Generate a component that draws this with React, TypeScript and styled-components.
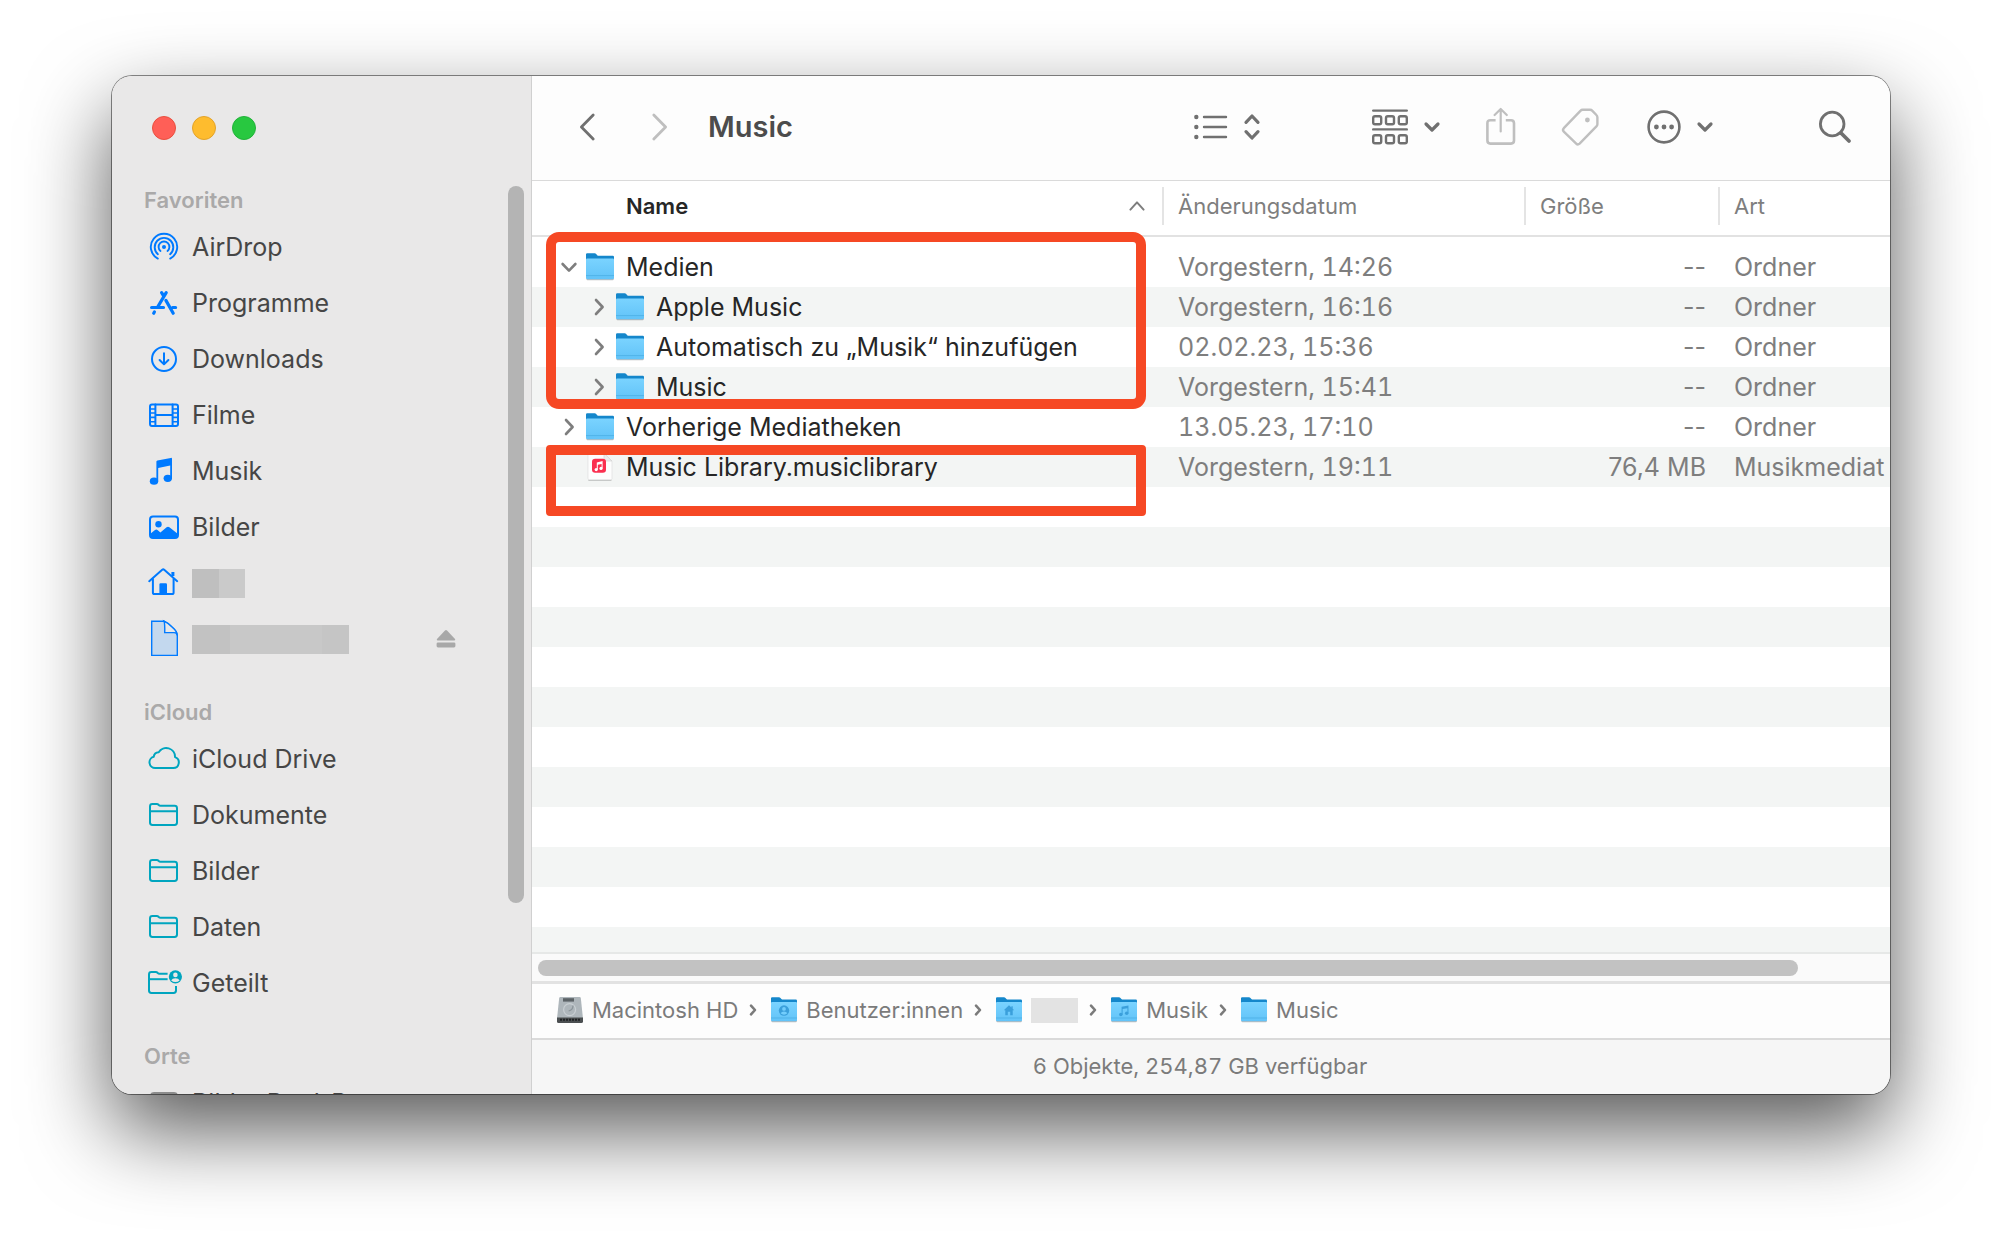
import React from "react";
import styled, { createGlobalStyle } from "styled-components";

const GlobalStyle = createGlobalStyle`
  *, *::before, *::after { box-sizing: border-box; }
  html, body { margin: 0; background: #fff; }
  body { font-family: Inter, "Liberation Sans", sans-serif; color: #262626; }
  button { font: inherit; color: inherit; background: none; border: 0; padding: 0; cursor: default; }
  a { color: inherit; text-decoration: none; }
  svg { display: block; flex: none; overflow: visible; }
`;

/* ---------- layout ---------- */

const Desktop = styled.div`
  height: 100vh;
  padding: 76px 112px 148px;
  display: flex;
  overflow: hidden;
`;

const Window = styled.main`
  flex: 1;
  min-width: 0;
  display: flex;
  overflow: hidden;
  border-radius: 20px;
  background: #fff;
  box-shadow: 0 0 0 1px rgba(0, 0, 0, 0.45), 0 36px 84px rgba(0, 0, 0, 0.66);
`;

const Sidebar = styled.aside`
  flex: none;
  width: 420px;
  display: flex;
  flex-direction: column;
  background: #e9e8e8;
  border-right: 1px solid #d0d0d0;
`;

const TrafficLights = styled.div`
  flex: none;
  height: 105px;
  padding: 0 0 2px 40px;
  display: flex;
  align-items: center;
  gap: 16px;
`;

const Light = styled.button<{ $fill: string; $edge: string }>`
  width: 24px;
  height: 24px;
  border-radius: 50%;
  background: ${(p) => p.$fill};
  border: 1px solid ${(p) => p.$edge};
`;

const SidebarBody = styled.div`
  flex: 1;
  min-height: 0;
  display: flex;
`;

const SidebarList = styled.nav`
  flex: 1;
  min-width: 0;
  overflow: hidden;
  display: flex;
  flex-direction: column;
  gap: 26px;
`;

const ScrollTrack = styled.div`
  flex: none;
  padding: 5px 7px 0 0;
`;

const ScrollThumb = styled.div`
  width: 16px;
  height: 79%;
  border-radius: 8px;
  background: #b4b4b4;
`;

const SectionTitle = styled.h2`
  margin: 0;
  padding-left: 32px;
  font-size: 22px;
  font-weight: 600;
  line-height: 38px;
  color: #aaa9a9;
`;

const Items = styled.ul`
  margin: 0;
  padding: 0;
  list-style: none;
`;

const Item = styled.li`
  height: 56px;
  padding: 0 52px 0 36px;
  display: flex;
  align-items: center;
  justify-content: space-between;
  color: #a8a8a8;
`;

const ItemLink = styled.a<{ $tint: string }>`
  display: flex;
  align-items: center;
  gap: 12px;
  font-size: 25px;
  line-height: 32px;
  white-space: nowrap;
  color: #464646;
  > svg { color: ${(p) => p.$tint}; }
`;

const Redaction = styled.span<{ $w: number; $h: number; $fill: string }>`
  display: block;
  width: ${(p) => p.$w}px;
  height: ${(p) => p.$h}px;
  background: ${(p) => p.$fill};
`;

const Main = styled.section`
  flex: 1;
  min-width: 0;
  display: flex;
  flex-direction: column;
`;

const Toolbar = styled.header`
  flex: none;
  height: 105px;
  padding: 0 39px 2px 47px;
  display: flex;
  align-items: center;
  background: #fdfdfd;
  border-bottom: 1px solid #dadada;
`;

const History = styled.div`
  display: flex;
  gap: 57px;
`;

const FolderTitle = styled.h1`
  margin: 0 0 0 40px;
  font-size: 29px;
  line-height: 36px;
  font-weight: 600;
  color: #4c4c4c;
`;

const Tools = styled.div`
  margin-left: auto;
  display: flex;
  align-items: center;
  gap: 46px;
`;

const ToolButton = styled.button<{ $dim?: boolean; $before?: number; $after?: number }>`
  display: flex;
  align-items: center;
  gap: 16px;
  margin: 0 ${(p) => p.$after ?? 0}px 0 ${(p) => p.$before ?? 0}px;
  color: ${(p) => (p.$dim ? "#bfbfbf" : "#707070")};
`;

const FileList = styled.div`
  position: relative;
  flex: 1;
  min-height: 0;
  overflow: hidden;
  display: flex;
  flex-direction: column;
`;

const Table = styled.table`
  width: 100%;
  table-layout: fixed;
  border-collapse: collapse;
  tbody::before { content: ""; display: block; height: 10px; }
`;

const HeadCell = styled.th`
  height: 55px;
  padding: 0 0 4px;
  border-bottom: 2px solid #e2e2e2;
  text-align: left;
  font-size: 22px;
  font-weight: 400;
  color: #7e7e7e;
`;

const HeadButton = styled.button<{ $sorted?: boolean }>`
  width: 100%;
  height: 38px;
  display: flex;
  align-items: center;
  justify-content: space-between;
  padding: ${(p) => (p.$sorted ? "0 17px 0 94px" : "0 0 0 14px")};
  border-left: ${(p) => (p.$sorted ? "0" : "2px solid #e4e4e4")};
  font-weight: ${(p) => (p.$sorted ? 600 : 400)};
  color: ${(p) => (p.$sorted ? "#262626" : "inherit")};
  > svg { color: #7e7e7e; }
`;

const Row = styled.tr`
  height: 40px;
  &:nth-child(even) { background: #f3f5f4; }
`;

const Cell = styled.td`
  padding: 0 0 0 16px;
  overflow: hidden;
  white-space: nowrap;
  font-size: 25px;
  line-height: 32px;
  color: #7e7e7e;
`;

const NameCell = styled(Cell)`
  padding: 0;
  color: #262626;
`;

const DateCell = styled(Cell)`
  font-variant-numeric: tabular-nums;
`;

const SizeCell = styled(Cell)`
  padding-right: 12px;
  text-align: right;
`;

const NameLine = styled.div<{ $level: number }>`
  display: flex;
  align-items: center;
  padding-left: ${(p) => 28 + p.$level * 30}px;
`;

const Disclosure = styled.button`
  flex: none;
  width: 18px;
  margin-right: 8px;
  display: flex;
  justify-content: center;
  color: #7e7e7e;
`;

const FileName = styled.span`
  margin-left: 12px;
`;

const EmptyRows = styled.div`
  flex: 1;
  background: repeating-linear-gradient(#fff 0 40px, #f3f5f4 40px 80px);
`;

const Mark = styled.div<{ $top: number; $height: number; $radius: number }>`
  position: absolute;
  left: 14px;
  right: 744px;
  top: ${(p) => p.$top}px;
  height: ${(p) => p.$height}px;
  border: 10px solid #f64824;
  border-radius: ${(p) => p.$radius}px;
  pointer-events: none;
`;

const HorizontalTrack = styled.div`
  flex: none;
  height: 32px;
  padding: 6px 92px 6px 6px;
  background: #fafafa;
  border-top: 2px solid #e6e8e7;
  border-bottom: 3px solid #e2e2e2;
`;

const HorizontalThumb = styled.div`
  height: 16px;
  border-radius: 8px;
  background: #c2c2c2;
`;

const PathBar = styled.nav`
  flex: none;
  height: 56px;
  padding: 0 0 2px 25px;
  display: flex;
  align-items: center;
  background: #fdfdfd;
  border-bottom: 2px solid #dadada;
  font-size: 22px;
  color: #7b7b7b;
`;

const Separator = styled.span`
  padding: 0 14px 0 11px;
`;

const Crumb = styled.a`
  display: flex;
  align-items: center;
  gap: 9px;
  line-height: 28px;
`;

const StatusBar = styled.footer`
  flex: none;
  height: 54px;
  padding: 0 22px 2px 0;
  display: flex;
  align-items: center;
  justify-content: center;
  background: #f6f6f6;
  font-size: 22px;
  font-variant-numeric: tabular-nums;
  color: #7b7b7b;
`;

/* ---------- sidebar icons ---------- */

const Glyph = ({ children }: { children: React.ReactNode }) => (
  <svg width="32" height="32" viewBox="0 0 32 32" fill="none" stroke="currentColor" strokeWidth="2" strokeLinecap="round" strokeLinejoin="round" aria-hidden="true">
    {children}
  </svg>
);

const AirDropIcon = () => (
  <Glyph>
    <g strokeWidth="1.9">
      <path d="M9.8 27.6A13.2 13.2 0 1 1 22.2 27.6" />
      <path d="M9.9 23.2A9.3 9.3 0 1 1 22.1 23.2" />
      <path d="M12.5 20A5.4 5.4 0 1 1 19.5 20" />
    </g>
    <circle cx="16" cy="16" r="2" fill="currentColor" stroke="none" />
  </Glyph>
);

const AppsIcon = () => (
  <Glyph>
    <g strokeWidth="3.2">
      <path d="M3.6 20.5H15.5M24.5 20.5H27.6" />
      <path d="M18.2 5.6L9.8 19.8M13.6 5.6L15.3 8.4" />
      <path d="M17.9 13.4L25.2 26.2" />
      <path d="M5.7 26.2L6.4 25" />
    </g>
  </Glyph>
);

const DownloadIcon = () => (
  <Glyph>
    <circle cx="16" cy="16" r="12" />
    <path d="M16 10.2V21.2M11.6 17L16 21.4L20.4 17" />
  </Glyph>
);

const FilmIcon = () => (
  <Glyph>
    <rect x="2" y="5.4" width="28" height="21.6" rx="2" />
    <path d="M7.4 5.4V27M24.6 5.4V27M7.4 16H24.6" />
    <path strokeWidth="1.6" strokeLinecap="butt" d="M2 10H7.4M2 14H7.4M2 18.4H7.4M2 22.7H7.4M24.6 10H30M24.6 14H30M24.6 18.4H30M24.6 22.7H30" />
  </Glyph>
);

const MusicIcon = () => (
  <Glyph>
    <g fill="currentColor" stroke="none">
      <ellipse cx="6" cy="26.2" rx="4.2" ry="3.6" />
      <ellipse cx="19.8" cy="23.3" rx="4.2" ry="3.6" />
      <path d="M8.4 6.6Q8.4 5.6 9.4 5.4L22.8 2.9Q24 2.7 24 3.8V23.4H22.2V10.4L10.2 12.9V26.2H8.4Z" />
    </g>
  </Glyph>
);

const PictureIcon = () => (
  <Glyph>
    <rect x="2" y="5.4" width="28" height="21.6" rx="3" />
    <circle cx="10.5" cy="13.2" r="3.2" fill="currentColor" stroke="none" />
    <path d="M2 23L7 19Q8.4 18 9.8 19.2L12.4 21.4L18.6 16.2Q20 15.2 21.4 16.2L30 23V25Q30 27 28 27H4Q2 27 2 25Z" fill="currentColor" stroke="none" />
  </Glyph>
);

const HomeIcon = () => (
  <Glyph>
    <path d="M1.2 14.2L14.2 2.8Q15.2 2 16.2 2.8L29.2 14.2" />
    <path d="M4.9 12V25.4Q4.9 27 6.5 27H24Q25.6 27 25.6 25.4V12" />
    <path d="M24.9 5V9" strokeWidth="3" strokeLinecap="butt" />
    <path d="M11.4 27V17.4Q11.4 16.2 12.6 16.2H17.8Q19 16.2 19 17.4V27Z" fill="currentColor" stroke="none" />
  </Glyph>
);

const DocumentIcon = () => (
  <Glyph>
    <g strokeWidth="1.4" strokeLinejoin="miter">
      <path d="M3.7-1.8H16Q20 0 24 4Q29.3 8.6 29.3 12.4V32.4H3.7Z" fill="#c3d8ee" />
      <path d="M16-1.8Q17 .6 16.7 9.6H26Q29 9.6 29.3 12.4Q29.3 8.6 24 4Q20 0 16-1.8Z" fill="#e9e8e8" />
    </g>
  </Glyph>
);

const CloudIcon = () => (
  <Glyph>
    <path d="M7.4 25H25.2A5.6 5.6 0 0 0 27 14.1A8.8 8.8 0 0 0 10.7 9.2A5.2 5.2 0 0 0 5.7 13.8A5.7 5.7 0 0 0 7.4 25Z" />
  </Glyph>
);

const FolderIcon = () => (
  <Glyph>
    <path d="M2 7.4Q2 5 4.4 5H8.8Q9.8 5 10.6 5.8Q11.4 6.8 12.6 6.8H26.6Q29 6.8 29 9.2V23.6Q29 26 26.6 26H4.4Q2 26 2 23.6Z" />
    <path d="M2 12.2H29" />
  </Glyph>
);

const SharedFolderIcon = () => (
  <Glyph>
    <path d="M19.6 6.8H11.6Q10.4 6.8 9.6 5.8Q8.8 5 7.8 5H3.4Q1 5 1 7.4V23.6Q1 26 3.4 26H25.6Q28 26 28 23.6V19" strokeLinecap="butt" />
    <path d="M1 12.2H19.6" strokeLinecap="butt" />
    <circle cx="27.4" cy="9.8" r="6.6" fill="currentColor" stroke="none" />
    <circle cx="27.4" cy="7.9" r="2.3" fill="#e9e8e8" stroke="none" />
    <path d="M23.2 13.4Q24.2 11.2 27.4 11.2T31.6 13.4Q29.8 15 27.4 15T23.2 13.4Z" fill="#e9e8e8" stroke="none" />
  </Glyph>
);

const DriveOutlineIcon = () => (
  <Glyph>
    <rect x="3" y="6" width="26" height="20" rx="3" fill="currentColor" />
  </Glyph>
);

const EjectIcon = () => (
  <svg width="20" height="20" viewBox="0 0 20 20" fill="currentColor" aria-hidden="true">
    <path d="M9 1.6Q10 .6 11 1.6L19 10Q19.8 11.4 18.4 11.4H1.6Q.2 11.4 1 10Z" />
    <rect x=".6" y="13.4" width="18.8" height="5" rx="1.4" />
  </svg>
);

/* ---------- toolbar icons ---------- */

type StrokeProps = { w: number; h: number; sw?: number; children: React.ReactNode };
const Line = ({ w, h, sw = 2.6, children }: StrokeProps) => (
  <svg width={w} height={h} viewBox={`0 0 ${w} ${h}`} fill="none" stroke="currentColor" strokeWidth={sw} strokeLinecap="round" strokeLinejoin="round" aria-hidden="true">
    {children}
  </svg>
);

const ChevronSmall = () => <Line w={16} h={10} sw={3.2}><path d="M2 2L8 8L14 2" /></Line>;

const ListIcon = () => (
  <Line w={34} h={26}>
    <path d="M10 3H32M10 13H32M10 23H32" strokeWidth="2.4" />
    <g fill="currentColor" stroke="none">
      <circle cx="2.3" cy="3" r="2.2" /><circle cx="2.3" cy="13" r="2.2" /><circle cx="2.3" cy="23" r="2.2" />
    </g>
  </Line>
);

const UpDownIcon = () => <Line w={16} h={26} sw={3.2}><path d="M2 8.4L8 2L14 8.4M2 17.6L8 24L14 17.6" /></Line>;

const GroupIcon = () => (
  <Line w={36} h={36} sw={2.4}>
    <path d="M1.2 1.6H34.8M1.2 20.4H34.8" />
    {[7.2, 26.2].map((y) => [1.2, 14, 26.8].map((x) => <rect key={`${x}-${y}`} x={x} y={y} width="8" height="8" rx="1.8" />))}
  </Line>
);

const ShareIcon = () => (
  <Line w={30} h={38} sw={2.6}>
    <path d="M9.6 12.2H4.4Q1.4 12.2 1.4 15.2V32.6Q1.4 35.6 4.4 35.6H25Q28 35.6 28 32.6V15.2Q28 12.2 25 12.2H19.8" strokeLinecap="butt" />
    <path d="M14.7 23.4V1.2M8.6 7L14.7 1L20.8 7" strokeWidth="2.2" />
  </Line>
);

const TagIcon = () => (
  <Line w={36} h={38} sw={2.4}>
    <path d="M20.6 1.8H28Q29.4 1.8 30.4 2.8L34.4 7Q35.4 8 35.4 9.4V16.2Q35.4 17.4 34.4 18.4L17.6 35.6Q15.8 37.2 14.2 35.6L1.8 23.6Q.2 22 1.8 20.2L18.4 2.8Q19.4 1.8 20.6 1.8Z" />
    <circle cx="25.4" cy="12" r="2.4" fill="currentColor" stroke="none" />
  </Line>
);

const MoreIcon = () => (
  <Line w={34} h={34} sw={2.6}>
    <circle cx="17" cy="17" r="15.4" />
    <g fill="currentColor" stroke="none">
      <circle cx="9.4" cy="17" r="2.4" /><circle cx="17" cy="17" r="2.4" /><circle cx="24.6" cy="17" r="2.4" />
    </g>
  </Line>
);

const SearchIcon = () => (
  <Line w={32} h={34} sw={2.8}>
    <circle cx="13.2" cy="14" r="11.8" />
    <path d="M22 23L30 31" strokeWidth="3.8" />
  </Line>
);

/* ---------- coloured file icons ---------- */

type Emblem = "person" | "home" | "note";

const BlueFolder = ({ size = 28, emblem }: { size?: number; emblem?: Emblem }) => (
  <svg width={size} height={size} viewBox="0 0 28 28" aria-hidden="true">
    <defs>
      <linearGradient id="folderFront" x1="0" y1="0" x2="0" y2="1">
        <stop offset="0" stopColor="#7ad3ff" />
        <stop offset="1" stopColor="#62c3f8" />
      </linearGradient>
    </defs>
    <rect x=".4" y="24.4" width="27.4" height="2.8" rx="1.2" fill="#000" opacity=".26" />
    <path d="M0 1.4Q0 .2 1.2 .2H8.6Q9.6 .2 10.2 1L11.2 2.2Q11.8 2.8 12.8 2.8H26.8Q28 2.8 28 4V12H0Z" fill="#1587cb" />
    <path d="M0 6.4Q0 5.4 1.2 5.4H26.8Q28 5.4 28 6.4V24.8Q28 26.2 26.8 26.2H1.2Q0 26.2 0 24.8Z" fill="url(#folderFront)" />
    <path d="M0 22.6H28" stroke="#4aaee2" strokeWidth=".8" />
    {emblem === "person" && (
      <g>
        <circle cx="14" cy="14.6" r="5.6" fill="#3a9fdb" />
        <circle cx="14" cy="12.8" r="2" fill="#72cdfc" />
        <path d="M10.4 17.6Q11.4 15.6 14 15.6T17.6 17.6Q16 19 14 19T10.4 17.6Z" fill="#72cdfc" />
      </g>
    )}
    {emblem === "home" && <path d="M14 9L8.4 14.2H10V19.6H12.7V16H15.3V19.6H18V14.2H19.6L18 12.7V10H16.6V11.4Z" fill="#3a9fdb" />}
    {emblem === "note" && (
      <g fill="#3a9fdb">
        <path d="M11.4 10.6L18.8 9.2V17.6H17.7V12L12.5 13V18.8H11.4Z" />
        <circle cx="10.6" cy="18.8" r="1.9" />
        <circle cx="16.9" cy="17.6" r="1.9" />
      </g>
    )}
  </svg>
);

const LibraryFile = () => (
  <svg width="28" height="28" viewBox="0 0 28 28" aria-hidden="true">
    <path d="M2.4 27.2H25.4" stroke="#000" strokeOpacity=".2" strokeWidth="1.6" />
    <path d="M2 1.6Q2 .4 3.2 .4H18L26 8V25.4Q26 26.8 24.6 26.8H3.4Q2 26.8 2 25.4Z" fill="#fdfdfd" stroke="#dedede" strokeWidth=".7" />
    <path d="M18 .4V6.6Q18 8 19.4 8H26Z" fill="#ededed" stroke="#d0d0d0" strokeWidth=".6" />
    <rect x="6" y="5.8" width="14" height="14" rx="3.2" fill="#fa2f4f" />
    <path d="M10.8 9.4L16.6 8V15.4H15.6V10.9L11.8 11.8V16.6H10.8Z" fill="#fff" />
    <circle cx="10.2" cy="16.6" r="1.6" fill="#fff" />
    <circle cx="15" cy="15.4" r="1.6" fill="#fff" />
  </svg>
);

const HardDrive = () => (
  <svg width="26" height="28" viewBox="0 0 26 28" aria-hidden="true">
    <path d="M3.4 1H22.6Q23.6 1 23.8 2L26 22.6H0L2.2 2Q2.4 1 3.4 1Z" fill="#aeb6bb" />
    <path d="M0 21.4H26V25.4Q26 27 24.4 27H1.6Q0 27 0 25.4Z" fill="#4b4f51" />
    <path d="M3 23.8H23" stroke="#202324" strokeWidth="2" strokeDasharray="2 1" />
    <rect x="6" y="2.2" width="11" height="3.4" fill="#5c6367" />
    <circle cx="12.6" cy="13.6" r="6" fill="none" stroke="#c9cfd3" strokeWidth="1.2" />
    <path d="M16 9.6Q16 14 11.6 15" fill="none" stroke="#8b9499" strokeWidth="1.2" />
  </svg>
);

const ChevronRight = () => <Line w={10} h={16} sw={2.6}><path d="M2 1L8.6 8L2 15" /></Line>;
const ChevronDown = () => <Line w={16} h={10} sw={2.6}><path d="M1.6 2L8 8.6L14.4 2" /></Line>;
const PathChevron = () => <Line w={8} h={12} sw={2.6}><path d="M2 1.6L6 6L2 10.4" /></Line>;

/* ---------- data ---------- */

const BLUE = "#007aff";
const TEAL = "#00a5bf";

type Place = { label?: string; hidden?: React.ReactNode; icon: React.ReactNode; eject?: boolean };

const sections: { title: string; tint: string; places: Place[] }[] = [
  {
    title: "Favoriten",
    tint: BLUE,
    places: [
      { label: "AirDrop", icon: <AirDropIcon /> },
      { label: "Programme", icon: <AppsIcon /> },
      { label: "Downloads", icon: <DownloadIcon /> },
      { label: "Filme", icon: <FilmIcon /> },
      { label: "Musik", icon: <MusicIcon /> },
      { label: "Bilder", icon: <PictureIcon /> },
      { hidden: <Redaction $w={53} $h={29} $fill="linear-gradient(90deg, #bfbfbf 27px, #cacaca 27px)" />, icon: <HomeIcon /> },
      {
        hidden: <Redaction $w={157} $h={29} $fill="linear-gradient(90deg, #c2c2c2 38px, #c8c8c8 38px 130px, #c5c5c5 130px)" />,
        icon: <DocumentIcon />,
        eject: true,
      },
    ],
  },
  {
    title: "iCloud",
    tint: TEAL,
    places: [
      { label: "iCloud Drive", icon: <CloudIcon /> },
      { label: "Dokumente", icon: <FolderIcon /> },
      { label: "Bilder", icon: <FolderIcon /> },
      { label: "Daten", icon: <FolderIcon /> },
      { label: "Geteilt", icon: <SharedFolderIcon /> },
    ],
  },
  { title: "Orte", tint: "#8c8c8c", places: [{ label: "Bilder Dani-P", icon: <DriveOutlineIcon /> }] },
];

type FileEntry = { name: string; level: number; state?: "open" | "closed"; date: string; size: string; kind: string };

const files: FileEntry[] = [
  { name: "Medien", level: 0, state: "open", date: "Vorgestern, 14:26", size: "--", kind: "Ordner" },
  { name: "Apple Music", level: 1, state: "closed", date: "Vorgestern, 16:16", size: "--", kind: "Ordner" },
  { name: "Automatisch zu „Musik“ hinzufügen", level: 1, state: "closed", date: "02.02.23, 15:36", size: "--", kind: "Ordner" },
  { name: "Music", level: 1, state: "closed", date: "Vorgestern, 15:41", size: "--", kind: "Ordner" },
  { name: "Vorherige Mediatheken", level: 0, state: "closed", date: "13.05.23, 17:10", size: "--", kind: "Ordner" },
  { name: "Music Library.musiclibrary", level: 0, date: "Vorgestern, 19:11", size: "76,4 MB", kind: "Musikmediat" },
];

const crumbs: { label?: string; icon: React.ReactNode }[] = [
  { label: "Macintosh HD", icon: <HardDrive /> },
  { label: "Benutzer:innen", icon: <BlueFolder size={26} emblem="person" /> },
  { icon: <BlueFolder size={26} emblem="home" /> },
  { label: "Musik", icon: <BlueFolder size={26} emblem="note" /> },
  { label: "Music", icon: <BlueFolder size={26} /> },
];

/* ---------- window ---------- */

export default function App() {
  return (
    <Desktop>
      <GlobalStyle />
      <Window>
        <Sidebar>
          <TrafficLights>
            <Light $fill="#ff5f57" $edge="#e9503f" aria-label="Schließen" />
            <Light $fill="#febc2e" $edge="#e3a32a" aria-label="Minimieren" />
            <Light $fill="#28c840" $edge="#22b23a" aria-label="Zoomen" />
          </TrafficLights>
          <SidebarBody>
            <SidebarList aria-label="Seitenleiste">
              {sections.map((section) => (
                <section key={section.title}>
                  <SectionTitle>{section.title}</SectionTitle>
                  <Items>
                    {section.places.map((place, i) => (
                      <Item key={i}>
                        <ItemLink href="#" $tint={section.tint}>
                          {place.icon}
                          {place.label ?? place.hidden}
                        </ItemLink>
                        {place.eject && <button aria-label="Auswerfen"><EjectIcon /></button>}
                      </Item>
                    ))}
                  </Items>
                </section>
              ))}
            </SidebarList>
            <ScrollTrack><ScrollThumb /></ScrollTrack>
          </SidebarBody>
        </Sidebar>

        <Main>
          <Toolbar>
            <History>
              <ToolButton aria-label="Zurück"><Line w={16} h={28} sw={2.8}><path d="M14.2 2L2.4 14L14.2 26" /></Line></ToolButton>
              <ToolButton $dim aria-label="Vorwärts"><Line w={16} h={28} sw={2.8}><path d="M1.8 2L13.6 14L1.8 26" /></Line></ToolButton>
            </History>
            <FolderTitle>Music</FolderTitle>
            <Tools>
              <ToolButton $after={66} aria-label="Darstellung"><ListIcon /><UpDownIcon /></ToolButton>
              <ToolButton aria-label="Gruppieren"><GroupIcon /><ChevronSmall /></ToolButton>
              <ToolButton $dim aria-label="Teilen"><ShareIcon /></ToolButton>
              <ToolButton $dim $after={3} aria-label="Tags"><TagIcon /></ToolButton>
              <ToolButton aria-label="Aktionen"><MoreIcon /><ChevronSmall /></ToolButton>
              <ToolButton $before={60} aria-label="Suchen"><SearchIcon /></ToolButton>
            </Tools>
          </Toolbar>

          <FileList>
            <Table>
              <colgroup>
                <col />
                <col style={{ width: 362 }} />
                <col style={{ width: 194 }} />
                <col style={{ width: 172 }} />
              </colgroup>
              <thead>
                <tr>
                  <HeadCell aria-sort="ascending">
                    <HeadButton $sorted>Name<Line w={16} h={10} sw={2}><path d="M1.4 8.6L8 1.4L14.6 8.6" /></Line></HeadButton>
                  </HeadCell>
                  <HeadCell><HeadButton>Änderungsdatum</HeadButton></HeadCell>
                  <HeadCell><HeadButton>Größe</HeadButton></HeadCell>
                  <HeadCell><HeadButton>Art</HeadButton></HeadCell>
                </tr>
              </thead>
              <tbody>
                {files.map((file) => (
                  <Row key={file.name}>
                    <NameCell>
                      <NameLine $level={file.level}>
                        <Disclosure as={file.state ? "button" : "span"} aria-label={file.state ? file.name : undefined}>
                          {file.state === "open" && <ChevronDown />}
                          {file.state === "closed" && <ChevronRight />}
                        </Disclosure>
                        {file.state ? <BlueFolder /> : <LibraryFile />}
                        <FileName>{file.name}</FileName>
                      </NameLine>
                    </NameCell>
                    <DateCell>{file.date}</DateCell>
                    <SizeCell>{file.size}</SizeCell>
                    <Cell>{file.kind}</Cell>
                  </Row>
                ))}
              </tbody>
            </Table>
            <EmptyRows />
            <Mark $top={51} $height={177} $radius={13} />
            <Mark $top={264} $height={71} $radius={4} />
          </FileList>

          <HorizontalTrack><HorizontalThumb /></HorizontalTrack>

          <PathBar aria-label="Pfad">
            {crumbs.map((crumb, i) => (
              <React.Fragment key={i}>
                {i > 0 && <Separator><PathChevron /></Separator>}
                <Crumb href="#">
                  {crumb.icon}
                  {crumb.label ?? <Redaction $w={47} $h={25} $fill="#e3e3e3" />}
                </Crumb>
              </React.Fragment>
            ))}
          </PathBar>

          <StatusBar>6 Objekte, 254,87 GB verfügbar</StatusBar>
        </Main>
      </Window>
    </Desktop>
  );
}
